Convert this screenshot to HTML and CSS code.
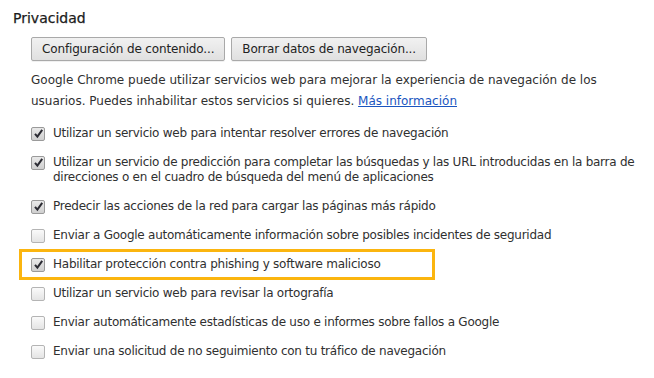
FILE: index.html
```html
<!DOCTYPE html>
<html lang="es">
<head>
<meta charset="utf-8">
<link rel="stylesheet" href="styles.css">
</head>
<body>
<section class="section">
  <h3 class="title">Privacidad</h3>
  <div class="content">
    <div class="buttons">
      <button class="btn">Configuración de contenido...</button>
      <button class="btn">Borrar datos de navegación...</button>
    </div>
    <p class="desc">Google Chrome puede utilizar servicios web para mejorar la experiencia de navegación de los usuarios. Puedes inhabilitar estos servicios si quieres. <a class="link" href="#">Más información</a></p>
    <ul class="options">
      <li class="opt"><span class="cb checked"><svg viewBox="0 0 13 13"><path d="M3 6.8 L5.4 9.6 L10.2 2.8" fill="none" stroke="#2b2b33" stroke-width="2"/></svg></span><span class="label">Utilizar un servicio web para intentar resolver errores de navegación</span></li>
      <li class="opt"><span class="cb checked"><svg viewBox="0 0 13 13"><path d="M3 6.8 L5.4 9.6 L10.2 2.8" fill="none" stroke="#2b2b33" stroke-width="2"/></svg></span><span class="label">Utilizar un servicio de predicción para completar las búsquedas y las URL introducidas en la barra de direcciones o en el cuadro de búsqueda del menú de aplicaciones</span></li>
      <li class="opt"><span class="cb checked"><svg viewBox="0 0 13 13"><path d="M3 6.8 L5.4 9.6 L10.2 2.8" fill="none" stroke="#2b2b33" stroke-width="2"/></svg></span><span class="label">Predecir las acciones de la red para cargar las páginas más rápido</span></li>
      <li class="opt"><span class="cb"></span><span class="label">Enviar a Google automáticamente información sobre posibles incidentes de seguridad</span></li>
      <li class="opt highlight"><span class="cb checked"><svg viewBox="0 0 13 13"><path d="M3 6.8 L5.4 9.6 L10.2 2.8" fill="none" stroke="#2b2b33" stroke-width="2"/></svg></span><span class="label">Habilitar protección contra phishing y software malicioso</span></li>
      <li class="opt"><span class="cb"></span><span class="label">Utilizar un servicio web para revisar la ortografía</span></li>
      <li class="opt"><span class="cb"></span><span class="label">Enviar automáticamente estadísticas de uso e informes sobre fallos a Google</span></li>
      <li class="opt"><span class="cb"></span><span class="label">Enviar una solicitud de no seguimiento con tu tráfico de navegación</span></li>
    </ul>
  </div>
</section>
</body>
</html>
```

FILE: styles.css
```css
html, body {
  margin: 0;
  background: #fff;
}
body {
  font-family: "DejaVu Sans", "Liberation Sans", sans-serif;
  font-size: 12px;
  color: #303030;
}
.section {
  padding: 8px 0 0 13px;
}
.title {
  margin: 0;
  font-size: 14px;
  font-weight: normal;
  line-height: 20px;
  color: #1c1c1c;
  -webkit-text-stroke: 0.25px #1c1c1c;
}
.content {
  padding-left: 18px;
  padding-right: 8px;
}
.buttons {
  display: flex;
  gap: 6px;
  margin-top: 9px;
}
.btn {
  height: 24px;
  padding: 0 10px;
  font-family: inherit;
  font-size: 12px;
  letter-spacing: -0.15px;
  color: #222;
  border: 1px solid #a9a9a9;
  border-radius: 2px;
  background: linear-gradient(#f1f1f1, #e0e0e0);
  box-shadow: 0 1px 0 rgba(0,0,0,0.06);
}
.desc {
  margin: 9px 0 0;
  line-height: 21px;
}
.link {
  color: #1a55c0;
  text-decoration: underline;
}
.options {
  list-style: none;
  margin: 14px 0 0;
  padding: 0;
}
.opt {
  display: flex;
  align-items: flex-start;
  gap: 8px;
  line-height: 15px;
  margin-bottom: 14px;
  position: relative;
}
.label {
  letter-spacing: -0.25px;
}
.cb {
  flex: none;
  width: 12px;
  height: 12px;
  margin-top: 1px;
  border: 1px solid #b4b4b4;
  border-radius: 2px;
  background: linear-gradient(#fafafa, #e4e4e4);
  position: relative;
}
.cb.checked {
  border-color: #9a9a9a;
  background: linear-gradient(#e9e9e9, #cfcfcf);
}
.cb svg {
  position: absolute;
  left: 0;
  top: -1px;
  width: 13px;
  height: 13px;
}
.highlight::after {
  content: "";
  position: absolute;
  left: -12px;
  top: -8px;
  width: 410px;
  height: 25px;
  border: 3px solid #fbb50f;
  pointer-events: none;
}
```
